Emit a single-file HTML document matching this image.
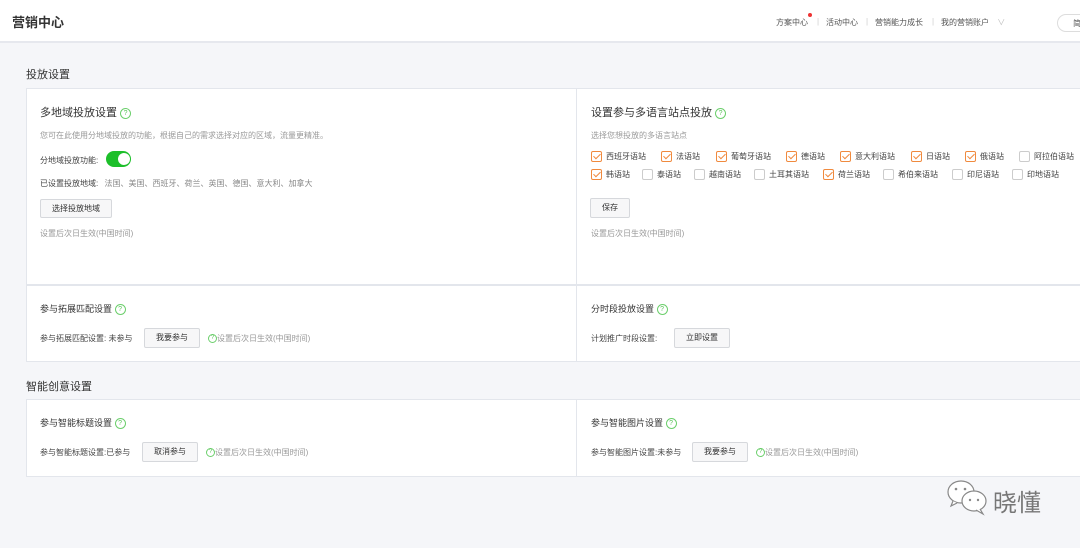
<!DOCTYPE html>
<html><head><meta charset="utf-8"><style>
*{margin:0;padding:0;box-sizing:border-box}
body{width:1080px;height:548px;overflow:hidden;background:#f5f6f9;font-family:"Liberation Sans","Noto Sans CJK SC",sans-serif;color:#333;position:relative}
.a{position:absolute;white-space:nowrap}
.hdr{position:absolute;left:0;top:0;width:1080px;height:43px;background:#fff;border-bottom:2px solid #e6e8ee}
.card{position:absolute;background:#fff;border:1px solid #e3e6ec}
.t{font-size:11px;color:#333}
.s{font-size:8px;color:#999}
.l{font-size:8px;color:#444}
.btn{position:absolute;border:1px solid #d6d8dc;background:#f7f7f8;border-radius:2px;font-size:8px;color:#333;text-align:center}
.q{display:inline-block;width:11px;height:11px;border:1px solid #6ccf6c;border-radius:50%;font-size:7px;line-height:9px;text-align:center;color:#5bc45b;vertical-align:middle}
.cb{position:absolute;font-size:8px;color:#444;line-height:11px}
.cb i{display:inline-block;width:11px;height:11px;border:1px solid #ccc;border-radius:2px;vertical-align:top;margin-right:4px;position:relative}
.cb i.on{border-color:#f08a3e}
.cb i.on:after{content:"";position:absolute;left:3px;top:0px;width:3px;height:6px;border:solid #f08a3e;border-width:0 1.5px 1.5px 0;transform:rotate(45deg)}
</style></head><body>
<div class="hdr"></div>
<div class="a" style="left:12px;top:12px;font-size:13px;font-weight:bold;color:#333">营销中心</div>
<div class="a" style="left:776px;top:17px;font-size:8px;color:#555">方案中心</div>
<div class="a" style="left:808px;top:13px;width:4px;height:4px;border-radius:50%;background:#e33"></div>
<div class="a" style="left:817px;top:17px;font-size:8px;color:#ccc">|</div>
<div class="a" style="left:826px;top:17px;font-size:8px;color:#555">活动中心</div>
<div class="a" style="left:866px;top:17px;font-size:8px;color:#ccc">|</div>
<div class="a" style="left:875px;top:17px;font-size:8px;color:#555">营销能力成长</div>
<div class="a" style="left:932px;top:17px;font-size:8px;color:#ccc">|</div>
<div class="a" style="left:941px;top:17px;font-size:8px;color:#555">我的营销账户 <span style="color:#bbb;margin-left:6px">∨</span></div>
<div class="a" style="left:1057px;top:14px;width:60px;height:18px;border:1px solid #ddd;border-radius:9px;font-size:8px;color:#555;padding:3px 0 0 15px">简</div>

<div class="a" style="left:26px;top:66px;font-size:11px;color:#333">投放设置</div>
<div class="card" style="left:26px;top:88px;width:1070px;height:274px"></div>
<div class="a" style="left:576px;top:88px;width:1px;height:274px;background:#e3e6ec"></div>
<div class="a" style="left:26px;top:284px;width:1060px;height:2px;background:#e3e6ec"></div>

<div class="a t" style="left:40px;top:104px">多地域投放设置 <span class="q">?</span></div>
<div class="a s" style="left:40px;top:130px">您可在此使用分地域投放的功能，根据自己的需求选择对应的区域，流量更精准。</div>
<div class="a l" style="left:40px;top:155px">分地域投放功能:</div>
<div class="a" style="left:106px;top:151px;width:25px;height:16px;border-radius:8px;background:#1dbf2a"></div>
<div class="a" style="left:118px;top:153px;width:12px;height:12px;border-radius:50%;background:#fff"></div>
<div class="a l" style="left:40px;top:178px">已设置投放地域: <span style="color:#888;margin-left:4px">法国、美国、西班牙、荷兰、英国、德国、意大利、加拿大</span></div>
<div class="btn" style="left:40px;top:199px;width:72px;height:19px;line-height:17px">选择投放地域</div>
<div class="a s" style="left:40px;top:228px">设置后次日生效(中国时间)</div>

<div class="a t" style="left:591px;top:104px">设置参与多语言站点投放 <span class="q">?</span></div>
<div class="a s" style="left:591px;top:130px">选择您想投放的多语言站点</div>
<div class="cb" style="left:591px;top:151px"><i class="on"></i>西班牙语站</div>
<div class="cb" style="left:661px;top:151px"><i class="on"></i>法语站</div>
<div class="cb" style="left:716px;top:151px"><i class="on"></i>葡萄牙语站</div>
<div class="cb" style="left:786px;top:151px"><i class="on"></i>德语站</div>
<div class="cb" style="left:840px;top:151px"><i class="on"></i>意大利语站</div>
<div class="cb" style="left:911px;top:151px"><i class="on"></i>日语站</div>
<div class="cb" style="left:965px;top:151px"><i class="on"></i>俄语站</div>
<div class="cb" style="left:1019px;top:151px"><i></i>阿拉伯语站</div>
<div class="cb" style="left:591px;top:169px"><i class="on"></i>韩语站</div>
<div class="cb" style="left:642px;top:169px"><i></i>泰语站</div>
<div class="cb" style="left:694px;top:169px"><i></i>越南语站</div>
<div class="cb" style="left:754px;top:169px"><i></i>土耳其语站</div>
<div class="cb" style="left:823px;top:169px"><i class="on"></i>荷兰语站</div>
<div class="cb" style="left:883px;top:169px"><i></i>希伯来语站</div>
<div class="cb" style="left:952px;top:169px"><i></i>印尼语站</div>
<div class="cb" style="left:1012px;top:169px"><i></i>印地语站</div>
<div class="btn" style="left:590px;top:198px;width:40px;height:20px;line-height:18px">保存</div>
<div class="a s" style="left:591px;top:228px">设置后次日生效(中国时间)</div>

<div class="a" style="left:40px;top:302px;font-size:9px;color:#333">参与拓展匹配设置 <span class="q">?</span></div>
<div class="a l" style="left:40px;top:333px">参与拓展匹配设置: 未参与</div>
<div class="btn" style="left:144px;top:328px;width:56px;height:20px;line-height:18px">我要参与</div>
<div class="a s" style="left:208px;top:333px"><span class="q" style="width:9px;height:9px;line-height:7px;font-size:6px">?</span>设置后次日生效(中国时间)</div>
<div class="a" style="left:591px;top:302px;font-size:9px;color:#333">分时段投放设置 <span class="q">?</span></div>
<div class="a l" style="left:591px;top:333px">计划推广时段设置:</div>
<div class="btn" style="left:674px;top:328px;width:56px;height:20px;line-height:18px">立即设置</div>

<div class="a" style="left:26px;top:378px;font-size:11px;color:#333">智能创意设置</div>
<div class="card" style="left:26px;top:399px;width:1070px;height:78px"></div>
<div class="a" style="left:576px;top:399px;width:1px;height:78px;background:#e3e6ec"></div>
<div class="a" style="left:40px;top:416px;font-size:9px;color:#333">参与智能标题设置 <span class="q">?</span></div>
<div class="a l" style="left:40px;top:447px">参与智能标题设置:已参与</div>
<div class="btn" style="left:142px;top:442px;width:56px;height:20px;line-height:18px">取消参与</div>
<div class="a s" style="left:206px;top:447px"><span class="q" style="width:9px;height:9px;line-height:7px;font-size:6px">?</span>设置后次日生效(中国时间)</div>
<div class="a" style="left:591px;top:416px;font-size:9px;color:#333">参与智能图片设置 <span class="q">?</span></div>
<div class="a l" style="left:591px;top:447px">参与智能图片设置:未参与</div>
<div class="btn" style="left:692px;top:442px;width:56px;height:20px;line-height:18px">我要参与</div>
<div class="a s" style="left:756px;top:447px"><span class="q" style="width:9px;height:9px;line-height:7px;font-size:6px">?</span>设置后次日生效(中国时间)</div>

<svg class="a" style="left:945px;top:478px" width="46" height="40" viewBox="0 0 46 40"><g fill="#fff" stroke="#888" stroke-width="1.2"><ellipse cx="16" cy="14" rx="13" ry="11"/><path d="M8 23 l-2 5 l6 -3"/><ellipse cx="29" cy="23" rx="12" ry="10"/><path d="M35 31 l3 5 l-7 -4"/></g><circle cx="11" cy="11" r="1.3" fill="#888"/><circle cx="20" cy="11" r="1.3" fill="#888"/><circle cx="25" cy="22" r="1.2" fill="#888"/><circle cx="33" cy="22" r="1.2" fill="#888"/></svg>
<div class="a" style="left:993px;top:483px;font-size:24px;color:#777">晓懂</div>
</body></html>
